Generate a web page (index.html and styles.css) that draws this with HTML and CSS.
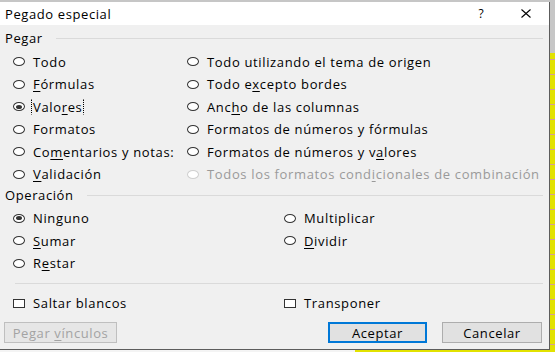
FILE: index.html
```html
<!DOCTYPE html>
<html lang="es">
<head>
  <meta charset="UTF-8">
  <title>Pegado especial</title>
  <link rel="stylesheet" href="styles.css">
</head>
<body>
  <div class="dialog">
    <div class="titlebar">
      <span class="title">Pegado especial</span>
      <span class="help">?</span>
      <span class="close">
        <svg width="10" height="9" viewBox="0 0 10 9"><path d="M0.5 0.5 L9.5 8.5 M9.5 0.5 L0.5 8.5" stroke="#000" stroke-width="1.1" fill="none"/></svg>
      </span>
    </div>

    <div class="group-head">Pegar</div>
    <div class="options paste">
      <label class="opt"><span class="radio"></span><span>Todo</span></label>
      <label class="opt"><span class="radio"></span><span>Todo utilizando el tema de origen</span></label>
      <label class="opt"><span class="radio"></span><span><u>F</u>órmulas</span></label>
      <label class="opt"><span class="radio"></span><span>Todo e<u>x</u>cepto bordes</span></label>
      <label class="opt"><span class="radio checked"></span><span class="focus">Valo<u>r</u>es</span></label>
      <label class="opt"><span class="radio"></span><span>Anc<u>h</u>o de las columnas</span></label>
      <label class="opt"><span class="radio"></span><span>Formatos</span></label>
      <label class="opt"><span class="radio"></span><span>Formatos de números y fórmulas</span></label>
      <label class="opt"><span class="radio"></span><span>Co<u>m</u>entarios y notas:</span></label>
      <label class="opt"><span class="radio"></span><span>Formatos de números y v<u>a</u>lores</span></label>
      <label class="opt"><span class="radio"></span><span><u>V</u>alidación</span></label>
      <label class="opt disabled"><span class="radio"></span><span>Todos los formatos cond<u>i</u>cionales de combinación</span></label>
    </div>

    <div class="group-head op">Operación</div>
    <div class="options operation">
      <label class="opt"><span class="radio checked"></span><span>Ninguno</span></label>
      <label class="opt"><span class="radio"></span><span>Multiplicar</span></label>
      <label class="opt"><span class="radio"></span><span><u>S</u>umar</span></label>
      <label class="opt"><span class="radio"></span><span><u>D</u>ividir</span></label>
      <label class="opt"><span class="radio"></span><span>R<u>e</u>star</span></label>
    </div>

    <div class="sep"></div>

    <div class="checks">
      <label class="opt"><span class="box"></span><span>Saltar blancos</span></label>
      <label class="opt"><span class="box"></span><span>Transponer</span></label>
    </div>

    <div class="buttons">
      <button class="btn disabled">Pegar <u>v</u>ínculos</button>
      <span class="spacer"></span>
      <button class="btn primary">Aceptar</button>
      <button class="btn">Cancelar</button>
    </div>
  </div>
</body>
</html>
```

FILE: styles.css
```css
body {
  margin: 0;
  width: 555px;
  height: 352px;
  overflow: hidden;
  font-family: 'Open Sans', 'DejaVu Sans', sans-serif;
  font-size: 13px;
  color: #000;
  background:
    linear-gradient(to right, #f4f4f4 355px, transparent 355px) left bottom / 100% 3px no-repeat,
    linear-gradient(to bottom, #c6c6c6 53px, transparent 53px),
    repeating-linear-gradient(to bottom, transparent 0 14px, #d39c9c 14px 15px),
    #e2e200;
}
.dialog {
  margin-top: 2px;
  width: 549px;
  height: 347px;
  background: #f0f0f0;
  border-right: 1px solid #5c5c5c;
  border-bottom: 1px solid #5c5c5c;
}
.titlebar {
  height: 23px;
  background: #fff;
  display: flex;
  align-items: center;
  padding-left: 5px;
}
.title {
  font-size: 13px;
  letter-spacing: 0.6px;
  flex: 1;
}
.help {
  width: 10px;
  text-align: center;
  margin-right: 35px;
  font-size: 12px;
}
.close {
  display: flex;
  margin-right: 18px;
}
.group-head {
  margin: 4px 6px 0 5px;
  height: 18px;
  display: flex;
  align-items: center;
  gap: 13px;
  letter-spacing: 0.6px;
}
.group-head::after {
  content: '';
  flex: 1;
  height: 1px;
  background: #dadada;
}
.group-head.op {
  margin-top: 0.5px;
}
.options {
  display: grid;
  grid-auto-rows: 22.5px;
  padding-left: 13px;
}
.paste {
  margin-top: 3.5px;
  grid-template-columns: 174px 1fr;
}
.operation {
  margin-top: 3px;
  grid-template-columns: 271px 1fr;
}
.opt {
  display: flex;
  align-items: center;
  gap: 8px;
  white-space: nowrap;
  letter-spacing: 0.65px;
}
u {
  text-decoration-thickness: 1px;
  text-underline-offset: 2px;
}
.radio {
  position: relative;
  flex: none;
  width: 10px;
  height: 7px;
  border: 1px solid #333;
  border-radius: 50%;
  background: #fff;
}
.radio.checked::after {
  content: '';
  position: absolute;
  left: 2px;
  top: 1.5px;
  width: 6px;
  height: 4px;
  border-radius: 50%;
  background: #333;
}
.focus {
  margin-left: -2px;
  padding: 0 1px;
  line-height: 14px;
  border: 1px dotted #000;
  border-top-color: transparent;
  border-bottom-color: transparent;
}
.disabled {
  color: #9a9a9a;
}
.disabled .radio {
  border-color: #cfcfcf;
}
.sep {
  margin: 8.5px 6px 0 15px;
  height: 1px;
  background: #dadada;
}
.checks {
  margin-top: 8px;
  height: 22px;
  display: grid;
  grid-template-columns: 271px 1fr;
  padding-left: 13px;
}
.box {
  flex: none;
  width: 10px;
  height: 7px;
  border: 1px solid #333;
  background: #fff;
}
.buttons {
  margin-top: 8px;
  height: 21px;
  display: flex;
  padding: 0 7px 0 4px;
  gap: 15px;
}
.spacer {
  flex: 1;
}
.btn {
  font-family: inherit;
  font-size: 13px;
  letter-spacing: 0.6px;
  color: #000;
  background: #e1e1e1;
  border: 1px solid #adadad;
  padding: 0;
  width: 100px;
  height: 21px;
}
.btn.primary {
  width: 99px;
  border: 2px solid #0078d7;
}
.btn.disabled {
  width: 113px;
  color: #a3a3a3;
  background: #e6e6e6;
  border-color: #bfbfbf;
}
```
